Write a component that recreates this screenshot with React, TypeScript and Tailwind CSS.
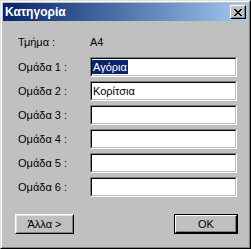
import React from "react";

function Field({ value, selected }: { value: string; selected?: boolean }) {
  return (
    <div className="w-[147px] h-[20px] border border-t-[#808080] border-l-[#808080] border-b-white border-r-white">
      <div className="h-full border border-t-black border-l-black border-b-[#c0c0c0] border-r-[#c0c0c0] bg-white flex items-center">
        {value ? (
          <span
            className={
              "text-[11px] leading-[14px] px-[1px] " +
              (selected ? "bg-[#0a246a] text-white" : "text-black")
            }
          >
            {value}
          </span>
        ) : null}
      </div>
    </div>
  );
}

function CloseGlyph() {
  const px: [number, number][] = [];
  const rows = ["XX....XX", ".XX..XX.", "..XXXX..", "...XX...", "..XXXX..", ".XX..XX.", "XX....XX"];
  rows.forEach((r, y) => r.split("").forEach((c, x) => c === "X" && px.push([x, y])));
  return (
    <svg width="8" height="7" viewBox="0 0 8 7" shapeRendering="crispEdges">
      {px.map(([x, y]) => (
        <rect key={x + "-" + y} x={x} y={y} width="1" height="1" fill="#000" />
      ))}
    </svg>
  );
}

export default function App() {
  const groups = ["Αγόρια", "Κορίτσια", "", "", "", ""];
  return (
    <div className="w-[251px] h-[249px] bg-[#c0c0c0] border border-t-[#dfdfdf] border-l-[#dfdfdf] border-b-black border-r-black font-['Liberation_Sans',Arial,sans-serif] text-black select-none">
      <div className="h-full border border-t-white border-l-white border-b-[#808080] border-r-[#808080] p-px flex flex-col">
        <div className="h-[18px] bg-linear-to-r from-[#0a246a] to-[#a6caf0] flex items-center justify-between pl-[2px] pr-[2px]">
          <span className="text-white font-bold text-[12px] leading-none">Κατηγορία</span>
          <div className="w-[16px] h-[14px] bg-[#c0c0c0] border border-t-white border-l-white border-b-black border-r-black">
            <div className="h-full border border-transparent border-b-[#808080] border-r-[#808080] flex items-center justify-center">
              <CloseGlyph />
            </div>
          </div>
        </div>

        <div className="flex-1 flex flex-col pl-[12px] pr-[11px] pt-[11px]">
          <div className="h-[20px] flex items-center text-[11px]">
            <div className="w-[75px] pl-[3px]">Τμήμα :</div>
            <div>A4</div>
          </div>
          <div className="mt-[5px] flex flex-col gap-[4px]">
            {groups.map((g, i) => (
              <div key={i} className="h-[20px] flex items-center text-[11px]">
                <div className="w-[75px] pl-[3px]">Ομάδα {i + 1} :</div>
                <Field value={g} selected={i === 0} />
              </div>
            ))}
          </div>
          <div className="mt-[17px] flex justify-between -mr-[1px]">
            <div className="w-[59px] h-[20px] border border-t-white border-l-white border-b-black border-r-black">
              <div className="h-full border border-t-[#dfdfdf] border-l-[#dfdfdf] border-b-[#808080] border-r-[#808080] flex items-center justify-center text-[11px]">
                Άλλα &gt;
              </div>
            </div>
            <div className="w-[64px] h-[20px] border border-black">
              <div className="h-full border border-t-white border-l-white border-b-black border-r-black">
                <div className="h-full border border-transparent border-b-[#808080] border-r-[#808080] flex items-center justify-center text-[11px]">
                  OK
                </div>
              </div>
            </div>
          </div>
        </div>
      </div>
    </div>
  );
}
